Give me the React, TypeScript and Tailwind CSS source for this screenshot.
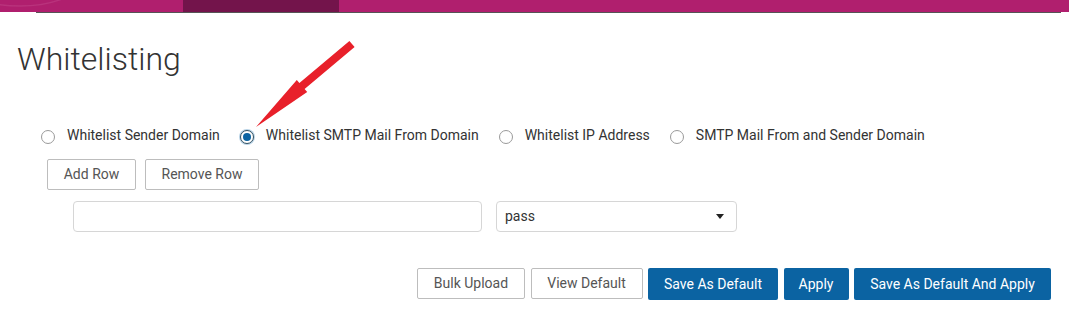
import { useState } from "react";

const options = [
    "Whitelist Sender Domain",
    "Whitelist SMTP Mail From Domain",
    "Whitelist IP Address",
    "SMTP Mail From and Sender Domain",
];

const App = () => {
    const [selected, setSelected] = useState(1);

    return (
        <div className="relative min-h-[320px] w-full bg-white font-['Roboto',sans-serif] text-[14px] text-[#333]">
            {/* Top bar */}
            <div className="relative h-3 w-full overflow-hidden bg-[#b01f6e]">
                <svg className="absolute left-0 top-0" width="80" height="12" viewBox="0 0 80 12">
                    <ellipse cx="20" cy="-14" rx="55" ry="20" fill="none" stroke="#c2468a" strokeOpacity="0.5" strokeWidth="1.5" />
                </svg>
                <div className="ml-[183px] h-3 w-[156px] bg-[#73144b]" />
            </div>
            <div className="ml-[36px] mr-[8px] h-px bg-[#555]" />

            {/* Title */}
            <h1 className="ml-[17px] mt-[28px] text-[32px] font-light leading-[36px] text-[#333]">Whitelisting</h1>

            {/* Radio options */}
            <div className="ml-[41px] mt-[48px] flex h-5 items-center gap-[20px]">
                {options.map((label, i) => (
                    <label key={label} className="flex cursor-pointer items-center gap-[12px]" onClick={() => setSelected(i)}>
                        {selected === i ? (
                            <span className="mt-[3px] flex h-[14px] w-[14px] items-center justify-center rounded-full border border-[#34505f] bg-white shadow-[0_0_0_1px_#b9d3e6]">
                                <span className="h-[8px] w-[8px] rounded-full bg-[#0b63a2]" />
                            </span>
                        ) : (
                            <span className="mt-[3px] h-[14px] w-[14px] rounded-full border border-[#9a9a9a] bg-white" />
                        )}
                        <span className="leading-5">{label}</span>
                    </label>
                ))}
            </div>

            {/* Row buttons */}
            <div className="ml-[47px] mt-[14px] flex gap-[9px]">
                <button className="h-[31px] w-[89px] rounded-[2px] border border-[#bdbdbd] bg-white text-[14px] text-[#555]">Add Row</button>
                <button className="h-[31px] w-[114px] rounded-[2px] border border-[#bdbdbd] bg-white text-[14px] text-[#555]">Remove Row</button>
            </div>

            {/* Inputs */}
            <div className="ml-[73px] mt-[11px] flex gap-[14px]">
                <input className="h-[31px] w-[409px] rounded-[4px] border border-[#d6d6d6] px-2 outline-none" />
                <div className="flex h-[31px] w-[241px] items-center justify-between rounded-[4px] border border-[#d6d6d6] pl-[8px] pr-[12px]">
                    <span>pass</span>
                    <svg width="8" height="5" viewBox="0 0 8 5">
                        <path d="M0 0 L8 0 L4 5 Z" fill="#222" />
                    </svg>
                </div>
            </div>

            {/* Action buttons */}
            <div className="mr-[18px] mt-[36px] flex justify-end gap-[5.5px]">
                <button className="h-[31px] w-[108px] rounded-[2px] border border-[#bdbdbd] bg-white text-[#555]">Bulk Upload</button>
                <button className="h-[31px] w-[112px] rounded-[2px] border border-[#bdbdbd] bg-white text-[#555]">View Default</button>
                <button className="h-[32px] w-[130px] rounded-[2px] bg-[#0b63a2] text-white">Save As Default</button>
                <button className="h-[32px] w-[65px] rounded-[2px] bg-[#0b63a2] text-white">Apply</button>
                <button className="h-[32px] w-[197px] rounded-[2px] bg-[#0b63a2] text-white">Save As Default And Apply</button>
            </div>

            {/* Red annotation arrow */}
            <svg className="pointer-events-none absolute left-0 top-0" width="400" height="160" viewBox="0 0 400 160">
                <polygon
                    points="349.4,40.9 354.6,47.1 304.6,89.1 307.2,92.1 256,127 296.8,79.9 299.4,82.9"
                    fill="#e8202a"
                />
            </svg>
        </div>
    );
};

export default App;
